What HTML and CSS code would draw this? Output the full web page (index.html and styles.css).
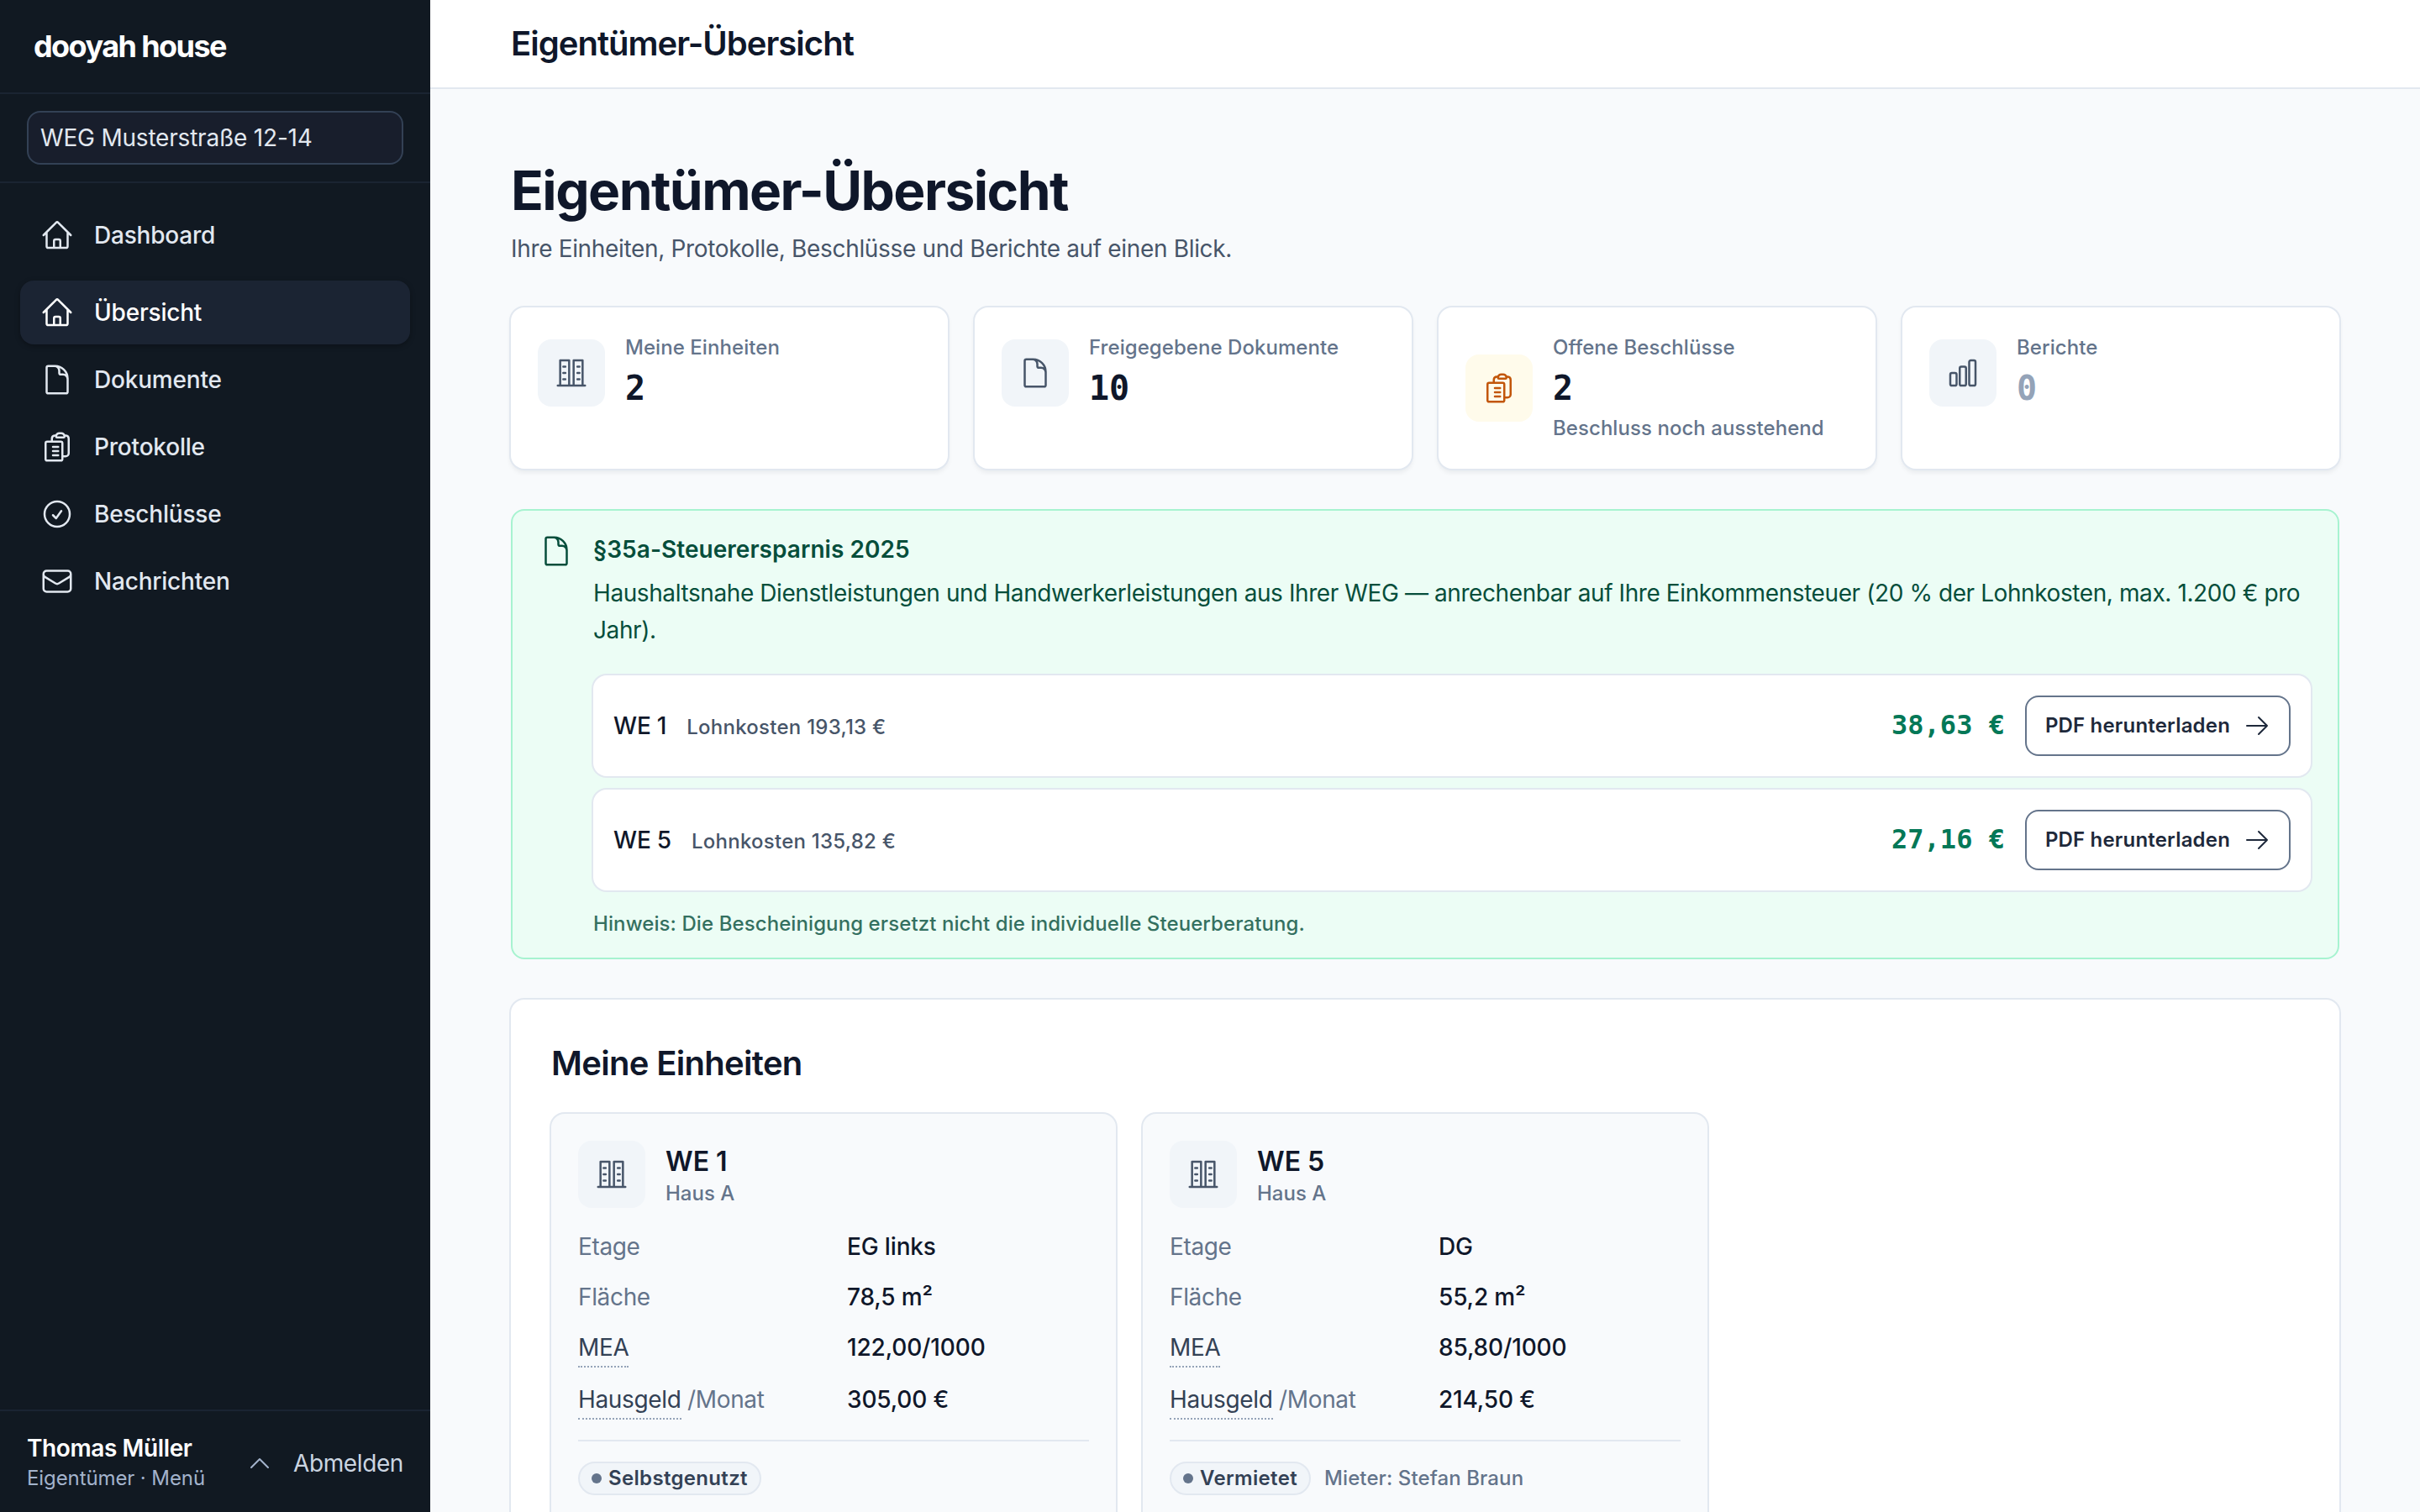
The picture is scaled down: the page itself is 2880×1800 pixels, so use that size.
FILE: index.html
```html
<!DOCTYPE html>
<html lang="de">
<head>
<meta charset="utf-8">
<title>Eigentümer-Übersicht</title>
<link rel="stylesheet" href="styles.css">
</head>
<body>

<!-- icon set, 24px grid -->
<svg class="sprite" aria-hidden="true">
  <symbol id="i-home" viewBox="0 0 24 24"><path d="m2.25 12 8.954-8.955c.44-.439 1.152-.439 1.591 0L21.75 12M4.5 9.75v10.125c0 .621.504 1.125 1.125 1.125H9.75v-4.875c0-.621.504-1.125 1.125-1.125h2.25c.621 0 1.125.504 1.125 1.125V21h4.125c.621 0 1.125-.504 1.125-1.125V9.75M8.25 21h8.25"/></symbol>
  <symbol id="i-doc" viewBox="0 0 24 24"><path d="M19.5 14.25v-2.625a3.375 3.375 0 0 0-3.375-3.375h-1.5A1.125 1.125 0 0 1 13.5 7.125v-1.5a3.375 3.375 0 0 0-3.375-3.375H8.25m2.25 0H5.625c-.621 0-1.125.504-1.125 1.125v17.25c0 .621.504 1.125 1.125 1.125h12.75c.621 0 1.125-.504 1.125-1.125V11.25a9 9 0 0 0-9-9Z"/></symbol>
  <symbol id="i-clip" viewBox="0 0 24 24"><path d="M9 12h3.75M9 15h3.75M9 18h3.75m3 .75H18a2.25 2.25 0 0 0 2.25-2.25V6.108c0-1.135-.845-2.098-1.976-2.192a48.424 48.424 0 0 0-1.123-.08m-5.801 0c-.065.21-.1.433-.1.664 0 .414.336.75.75.75h4.5a.75.75 0 0 0 .75-.75 2.25 2.25 0 0 0-.1-.664m-5.8 0A2.251 2.251 0 0 1 13.5 2.25H15c1.012 0 1.867.668 2.15 1.586m-5.8 0c-.376.023-.75.05-1.124.08C9.095 4.01 8.25 4.973 8.25 6.108V8.25m0 0H4.875c-.621 0-1.125.504-1.125 1.125v11.25c0 .621.504 1.125 1.125 1.125h9.75c.621 0 1.125-.504 1.125-1.125V9.375c0-.621-.504-1.125-1.125-1.125H8.25Z"/></symbol>
  <symbol id="i-check" viewBox="0 0 24 24"><path d="M9 12.75 11.25 15 15 9.75M21 12a9 9 0 1 1-18 0 9 9 0 0 1 18 0Z"/></symbol>
  <symbol id="i-mail" viewBox="0 0 24 24"><path d="M21.75 6.75v10.5a2.25 2.25 0 0 1-2.25 2.25h-15a2.25 2.25 0 0 1-2.25-2.25V6.75m19.5 0A2.25 2.25 0 0 0 19.5 4.5h-15a2.25 2.25 0 0 0-2.25 2.25m19.5 0v.243a2.25 2.25 0 0 1-1.07 1.916l-7.5 4.615a2.25 2.25 0 0 1-2.36 0L3.32 8.91a2.25 2.25 0 0 1-1.07-1.916V6.75"/></symbol>
  <symbol id="i-building" viewBox="0 0 24 24"><path d="M2.25 21h19.5M4 21V3h6.4v18M13.6 21V3H20v18M6.2 7.5h1.5M6.2 12h1.5M6.2 16.5h1.5M16.3 7.5h1.5M16.3 12h1.5M16.3 16.5h1.5"/></symbol>
  <symbol id="i-chart" viewBox="0 0 24 24"><path d="M3 13.125C3 12.504 3.504 12 4.125 12h2.25c.621 0 1.125.504 1.125 1.125v6.75C7.5 20.496 6.996 21 6.375 21h-2.25A1.125 1.125 0 0 1 3 19.875v-6.75ZM9.75 8.625c0-.621.504-1.125 1.125-1.125h2.25c.621 0 1.125.504 1.125 1.125v11.25c0 .621-.504 1.125-1.125 1.125h-2.25a1.125 1.125 0 0 1-1.125-1.125V8.625ZM16.5 4.125c0-.621.504-1.125 1.125-1.125h2.25C20.496 3 21 3.504 21 4.125v15.75c0 .621-.504 1.125-1.125 1.125h-2.25a1.125 1.125 0 0 1-1.125-1.125V4.125Z"/></symbol>
  <symbol id="i-arrow" viewBox="0 0 24 24"><path d="M13.5 4.5 21 12m0 0-7.5 7.5M21 12H3"/></symbol>
  <symbol id="i-up" viewBox="0 0 24 24"><path d="m4.5 15.75 7.5-7.5 7.5 7.5"/></symbol>
</svg>

<div class="app">
  <aside class="sidebar">
    <div class="brand">dooyah house</div>
    <div class="picker"><div class="select">WEG Musterstraße 12-14</div></div>
    <nav class="nav">
      <a class="nav-item first"><svg class="icon"><use href="#i-home"/></svg>Dashboard</a>
      <a class="nav-item active"><svg class="icon"><use href="#i-home"/></svg>Übersicht</a>
      <a class="nav-item"><svg class="icon"><use href="#i-doc"/></svg>Dokumente</a>
      <a class="nav-item"><svg class="icon"><use href="#i-clip"/></svg>Protokolle</a>
      <a class="nav-item"><svg class="icon"><use href="#i-check"/></svg>Beschlüsse</a>
      <a class="nav-item"><svg class="icon"><use href="#i-mail"/></svg>Nachrichten</a>
    </nav>
    <div class="user">
      <div class="user-info">
        <div class="user-name">Thomas Müller</div>
        <div class="user-role">Eigentümer · Menü</div>
      </div>
      <svg class="icon icon-sm user-chevron"><use href="#i-up"/></svg>
      <a class="logout">Abmelden</a>
    </div>
  </aside>

  <div class="main">
    <header class="topbar">Eigentümer-Übersicht</header>
    <main class="content">
      <div class="page-head">
        <h1>Eigentümer-Übersicht</h1>
        <p class="lead">Ihre Einheiten, Protokolle, Beschlüsse und Berichte auf einen Blick.</p>
      </div>

      <div class="stats">
        <div class="stat">
          <div class="tile"><svg class="icon"><use href="#i-building"/></svg></div>
          <div>
            <div class="stat-label">Meine Einheiten</div>
            <div class="stat-value">2</div>
          </div>
        </div>
        <div class="stat">
          <div class="tile"><svg class="icon"><use href="#i-doc"/></svg></div>
          <div>
            <div class="stat-label">Freigegebene Dokumente</div>
            <div class="stat-value">10</div>
          </div>
        </div>
        <div class="stat">
          <div class="tile tile-warn"><svg class="icon"><use href="#i-clip"/></svg></div>
          <div>
            <div class="stat-label">Offene Beschlüsse</div>
            <div class="stat-value">2</div>
            <div class="stat-note">Beschluss noch ausstehend</div>
          </div>
        </div>
        <div class="stat">
          <div class="tile"><svg class="icon"><use href="#i-chart"/></svg></div>
          <div>
            <div class="stat-label">Berichte</div>
            <div class="stat-value muted">0</div>
          </div>
        </div>
      </div>

      <section class="tax">
        <svg class="icon"><use href="#i-doc"/></svg>
        <div class="tax-body">
          <h2 class="tax-title">§35a-Steuerersparnis 2025</h2>
          <p class="tax-text">Haushaltsnahe Dienstleistungen und Handwerkerleistungen aus Ihrer WEG — anrechenbar auf Ihre Einkommensteuer (20 % der Lohnkosten, max. 1.200 € pro Jahr).</p>
          <div class="tax-rows">
            <div class="tax-row">
              <span class="tax-unit">WE 1</span>
              <span class="tax-cost">Lohnkosten 193,13 €</span>
              <span class="tax-amount">38,63 €</span>
              <a class="btn">PDF herunterladen<svg class="icon icon-sm"><use href="#i-arrow"/></svg></a>
            </div>
            <div class="tax-row">
              <span class="tax-unit">WE 5</span>
              <span class="tax-cost">Lohnkosten 135,82 €</span>
              <span class="tax-amount">27,16 €</span>
              <a class="btn">PDF herunterladen<svg class="icon icon-sm"><use href="#i-arrow"/></svg></a>
            </div>
          </div>
          <p class="tax-hint">Hinweis: Die Bescheinigung ersetzt nicht die individuelle Steuerberatung.</p>
        </div>
      </section>

      <section class="card">
        <h2 class="card-title">Meine Einheiten</h2>
        <div class="units">
          <article class="unit">
            <div class="unit-head">
              <div class="tile"><svg class="icon"><use href="#i-building"/></svg></div>
              <div class="unit-label">
                <div class="unit-name">WE 1</div>
                <div class="unit-sub">Haus A</div>
              </div>
            </div>
            <dl class="facts">
              <dt>Etage</dt><dd>EG links</dd>
              <dt>Fläche</dt><dd>78,5 m²</dd>
              <dt><abbr>MEA</abbr></dt><dd>122,00/1000</dd>
              <dt><abbr>Hausgeld</abbr> /Monat</dt><dd>305,00 €</dd>
            </dl>
            <div class="unit-foot"><span class="badge">Selbstgenutzt</span></div>
          </article>
          <article class="unit">
            <div class="unit-head">
              <div class="tile"><svg class="icon"><use href="#i-building"/></svg></div>
              <div class="unit-label">
                <div class="unit-name">WE 5</div>
                <div class="unit-sub">Haus A</div>
              </div>
            </div>
            <dl class="facts">
              <dt>Etage</dt><dd>DG</dd>
              <dt>Fläche</dt><dd>55,2 m²</dd>
              <dt><abbr>MEA</abbr></dt><dd>85,80/1000</dd>
              <dt><abbr>Hausgeld</abbr> /Monat</dt><dd>214,50 €</dd>
            </dl>
            <div class="unit-foot"><span class="badge">Vermietet</span><span class="tenant">Mieter: Stefan Braun</span></div>
          </article>
        </div>
      </section>
    </main>
  </div>
</div>
</body>
</html>
```
FILE: styles.css
```css
* {
  box-sizing: border-box;
}

body {
  margin: 0;
  background: #f8fafc;
  color: #0f172a;
  font-family: Inter, "Liberation Sans", sans-serif;
  font-size: 28px;
  line-height: 44px;
}

h1, h2, p, dl, dd {
  margin: 0;
}

.sprite {
  display: none;
}

.icon {
  width: 40px;
  height: 40px;
  flex: none;
  fill: none;
  stroke: currentColor;
  stroke-width: 1.5;
  stroke-linecap: round;
  stroke-linejoin: round;
}

.icon-sm {
  width: 32px;
  height: 32px;
}

.app {
  display: flex;
  height: 1800px;
  overflow: hidden;
}

/* Sidebar */
.sidebar {
  display: flex;
  flex-direction: column;
  width: 512px;
  flex: none;
  background: #111922;
  color: #e2e8f0;
}

.brand {
  height: 112px;
  padding: 0 40px;
  border-bottom: 2px solid #1a2432;
  color: #fff;
  font-size: 36px;
  font-weight: 700;
  line-height: 110px;
  letter-spacing: -0.044em;
}

.picker {
  padding: 20px 32px;
  border-bottom: 2px solid #1a2432;
}

.select {
  height: 64px;
  padding: 0 14px;
  border: 2px solid #334155;
  border-radius: 16px;
  background: #181e2c;
  line-height: 60px;
  letter-spacing: -0.2px;
}

.nav {
  display: flex;
  flex-direction: column;
  gap: 4px;
  flex: 1;
  padding: 24px;
}

.nav-item {
  display: flex;
  align-items: center;
  gap: 24px;
  height: 76px;
  padding: 0 24px;
  border-radius: 16px;
  font-weight: 500;
  letter-spacing: -0.2px;
}

.nav-item.first {
  margin-bottom: 12px;
}

.nav-item.active {
  background: #1b2433;
  color: #fff;
  box-shadow: 0 2px 6px rgba(0, 0, 0, 0.3);
}

.user {
  display: flex;
  align-items: center;
  height: 122px;
  padding: 3px 32px 0;
  border-top: 2px solid #1a2432;
}

.user-info {
  flex: 1;
}

.user-name {
  color: #fff;
  font-weight: 600;
  line-height: 36px;
  letter-spacing: -0.4px;
}

.user-role {
  color: #a3b3cc;
  font-size: 24px;
  line-height: 36px;
  letter-spacing: -0.1px;
}

.user-chevron {
  margin-right: 24px;
  color: #a3b3cc;
}

.logout {
  color: #cbd5e1;
  letter-spacing: -0.4px;
}

/* Main column */
.main {
  flex: 1;
}

.topbar {
  height: 106px;
  padding: 0 96px;
  border-bottom: 2px solid #e2e8f0;
  background: #fff;
  font-size: 40px;
  font-weight: 600;
  line-height: 104px;
  letter-spacing: -0.0245em;
}

.content {
  display: flex;
  flex-direction: column;
  gap: 48px;
  padding: 81px 96px;
}

h1 {
  font-size: 64px;
  font-weight: 700;
  line-height: 80px;
  letter-spacing: -0.024em;
}

.lead {
  margin-top: 7px;
  color: #475569;
  letter-spacing: -0.34px;
}

/* Figures */
.stats {
  display: grid;
  grid-template-columns: repeat(4, 1fr);
  gap: 32px;
}

.stat {
  display: flex;
  align-items: center;
  align-content: flex-start;
  flex-wrap: wrap;
  gap: 24px;
  height: 192px;
  padding: 32px;
  border-radius: 16px;
  background: #fff;
  box-shadow: 0 0 0 2px #e2e8f0, 0 4px 6px rgba(15, 23, 42, 0.08);
}

.tile {
  display: flex;
  align-items: center;
  justify-content: center;
  width: 80px;
  height: 80px;
  flex: none;
  border-radius: 16px;
  background: #f1f5f9;
  color: #475569;
}

.tile-warn {
  background: #fffbeb;
  color: #c2560a;
}

.stat-label, .stat-note {
  color: #64748b;
  font-size: 24px;
  font-weight: 500;
  line-height: 32px;
  letter-spacing: 0.06px;
}

.stat-value {
  margin-top: 4px;
  font-family: "DejaVu Sans Mono", monospace;
  font-size: 40px;
  font-weight: 700;
  line-height: 56px;
}

.stat-value.muted {
  color: #94a3b8;
}

.stat-note {
  margin-top: 4px;
}

/* Tax saving box */
.tax {
  display: flex;
  gap: 24px;
  height: 536px;
  padding: 28px 32px;
  border: 2px solid #a7f3d0;
  border-radius: 16px;
  background: #ecfdf5;
  color: #064e3b;
}

.tax-body {
  flex: 1;
}

.tax-title {
  font-size: 28px;
  font-weight: 600;
  line-height: 36px;
  letter-spacing: 0.05px;
}

.tax-text {
  margin-top: 12px;
  letter-spacing: -0.41px;
}

.tax-rows {
  display: flex;
  flex-direction: column;
  gap: 16px;
  margin-top: 32px;
}

.tax-row {
  display: flex;
  align-items: center;
  gap: 24px;
  height: 120px;
  padding: 0 24px;
  border-radius: 16px;
  background: #fff;
  color: #0f172a;
  box-shadow: 0 0 0 2px #e2e8f0;
}

.tax-unit {
  font-weight: 500;
  letter-spacing: -0.2px;
}

.tax-cost {
  flex: 1;
  padding-top: 3px;
  color: #475569;
  font-size: 24px;
  font-weight: 500;
  letter-spacing: 0.25px;
}

.tax-amount {
  padding-bottom: 3px;
  color: #047857;
  font-family: "DejaVu Sans Mono", monospace;
  font-size: 32px;
  font-weight: 700;
}

.btn {
  display: flex;
  align-items: center;
  gap: 16px;
  height: 72px;
  padding: 0 22px;
  border: 2px solid #64748b;
  border-radius: 16px;
  color: #1e293b;
  font-size: 24px;
  font-weight: 600;
  letter-spacing: 0.18px;
}

.tax-hint {
  margin-top: 22px;
  font-size: 24px;
  font-weight: 500;
  line-height: 36px;
  letter-spacing: 0.09px;
  opacity: 0.8;
}

/* Units */
.card {
  height: 760px;
  padding: 48px;
  border-radius: 16px;
  background: #fff;
  box-shadow: 0 0 0 2px #e2e8f0;
}

.card-title {
  font-size: 40px;
  font-weight: 600;
  line-height: 56px;
  letter-spacing: -0.017em;
}

.units {
  display: grid;
  grid-template-columns: repeat(3, 1fr);
  gap: 32px;
  margin-top: 32px;
}

.unit {
  height: 600px;
  padding: 32px;
  border-radius: 16px;
  background: #f8fafc;
  box-shadow: 0 0 0 2px #e2e8f0;
}

.unit-head {
  display: flex;
  align-items: center;
  gap: 24px;
}

.unit-label {
  padding-top: 4px;
}

.unit-name {
  font-size: 32px;
  font-weight: 600;
  line-height: 42px;
}

.unit-sub {
  color: #64748b;
  font-size: 24px;
  font-weight: 500;
  line-height: 34px;
}

.facts {
  display: grid;
  grid-template-columns: 1fr 1fr;
  gap: 16px 32px;
  margin-top: 24px;
}

.facts dt {
  color: #64748b;
  letter-spacing: -0.35px;
}

.facts dd {
  font-weight: 500;
  letter-spacing: -0.15px;
}

.facts abbr {
  display: inline-block;
  border-bottom: 2px dotted #94a3b8;
  color: #334155;
}

.unit-foot {
  display: flex;
  align-items: center;
  gap: 16px;
  margin-top: 24px;
  padding-top: 24px;
  border-top: 2px solid #e2e8f0;
}

.badge {
  display: flex;
  align-items: center;
  gap: 8px;
  height: 40px;
  padding: 0 14px;
  border: 2px solid #e2e8f0;
  border-radius: 20px;
  background: #f1f5f9;
  color: #334155;
  font-size: 24px;
  font-weight: 600;
  letter-spacing: 0.33px;
}

.badge::before {
  content: "";
  width: 12px;
  height: 12px;
  border-radius: 50%;
  background: #64748b;
}

.tenant {
  color: #64748b;
  font-size: 24px;
  font-weight: 500;
  line-height: 40px;
  letter-spacing: 0.1px;
}
```
